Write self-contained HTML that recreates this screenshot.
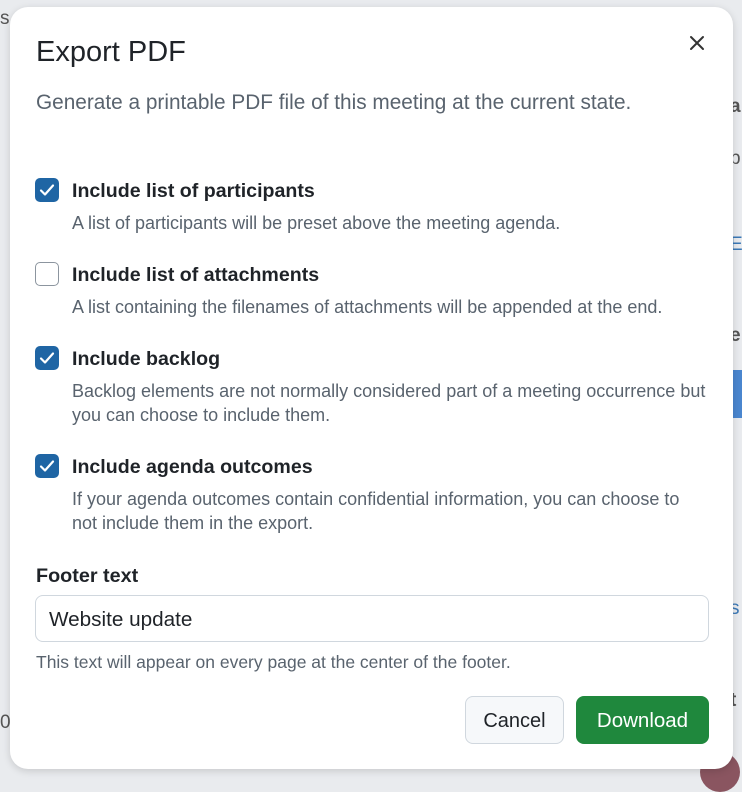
<!DOCTYPE html>
<html><head><style>
*{margin:0;padding:0;box-sizing:border-box}
body{width:742px;height:774px;overflow:hidden;background:#e9ebee;font-family:"Liberation Sans",sans-serif;position:relative;color:#1f2328}
.bg{position:absolute;color:#555;font-size:19px}
.modal{position:absolute;left:10px;top:7px;width:723px;height:762px;background:#fff;border-radius:18px;box-shadow:0 2px 8px rgba(0,0,0,.15)}
.a{position:absolute;white-space:nowrap}
.cb{position:absolute;left:25px;width:24px;height:24px;border-radius:5px;background:#1f65a4}
.cb svg{position:absolute;left:3px;top:3px}
.cb.off{background:#fff;border:1.5px solid #8c959f}
.lbl{position:absolute;left:62px;font-size:19.6px;font-weight:bold;color:#1f2328;white-space:nowrap}
.sub{position:absolute;left:62px;font-size:18px;color:#59636e;line-height:24px;white-space:nowrap}
</style></head><body>
<div class="bg" style="left:0;top:8px">s</div>
<div class="bg" style="left:730px;top:96px;font-weight:bold">a</div>
<div class="bg" style="left:730px;top:148px">b</div>
<div class="bg" style="left:730px;top:234px;color:#3b78b6">E</div>
<div class="bg" style="left:730px;top:325px;font-weight:bold">e</div>
<div style="position:absolute;left:733px;top:370px;width:9px;height:48px;background:#4a86cf"></div>
<div class="bg" style="left:730px;top:598px;color:#3b78b6">s</div>
<div class="bg" style="left:730px;top:690px;font-weight:bold">t</div>
<div class="bg" style="left:0;top:712px">0</div>
<div style="position:absolute;left:700px;top:752px;width:40px;height:40px;border-radius:50%;background:#8a5560"></div>
<div class="modal">
<div class="a" style="left:26px;top:29px;font-size:29px;color:#1f2328">Export PDF</div>
<svg class="a" style="left:679px;top:28px" width="16" height="16" viewBox="0 0 16 16"><path d="M2 2L14 14M14 2L2 14" stroke="#333" stroke-width="2" stroke-linecap="round"/></svg>
<div class="a" style="left:26px;top:84px;font-size:20.8px;color:#59636e">Generate a printable PDF file of this meeting at the current state.</div>

<div class="cb" style="top:171px"><svg width="18" height="18" viewBox="0 0 18 18"><path d="M3 9.5L7 13.5L15 4.5" fill="none" stroke="#fff" stroke-width="2.2" stroke-linecap="round" stroke-linejoin="round"/></svg></div>
<div class="lbl" style="top:173px">Include list of participants</div>
<div class="sub" style="top:204px">A list of participants will be preset above the meeting agenda.</div>

<div class="cb off" style="top:255px"></div>
<div class="lbl" style="top:257px">Include list of attachments</div>
<div class="sub" style="top:288px">A list containing the filenames of attachments will be appended at the end.</div>

<div class="cb" style="top:339px"><svg width="18" height="18" viewBox="0 0 18 18"><path d="M3 9.5L7 13.5L15 4.5" fill="none" stroke="#fff" stroke-width="2.2" stroke-linecap="round" stroke-linejoin="round"/></svg></div>
<div class="lbl" style="top:341px">Include backlog</div>
<div class="sub" style="top:372px">Backlog elements are not normally considered part of a meeting occurrence but<br>you can choose to include them.</div>

<div class="cb" style="top:447px"><svg width="18" height="18" viewBox="0 0 18 18"><path d="M3 9.5L7 13.5L15 4.5" fill="none" stroke="#fff" stroke-width="2.2" stroke-linecap="round" stroke-linejoin="round"/></svg></div>
<div class="lbl" style="top:449px">Include agenda outcomes</div>
<div class="sub" style="top:480px">If your agenda outcomes contain confidential information, you can choose to<br>not include them in the export.</div>

<div class="a" style="left:26px;top:558px;font-size:19.8px;font-weight:bold">Footer text</div>
<div class="a" style="left:25px;top:588px;width:674px;height:47px;border:1px solid #d0d7de;border-radius:8px;font-size:20.7px;padding:12px 0 0 13px">Website update</div>
<div class="a" style="left:26px;top:645px;font-size:17.5px;color:#59636e">This text will appear on every page at the center of the footer.</div>

<div class="a" style="left:455px;top:689px;width:99px;height:48px;border:1px solid #d0d7de;border-radius:8px;background:#f6f8fa;font-size:20px;text-align:center;line-height:48px">Cancel</div>
<div class="a" style="left:566px;top:689px;width:133px;height:48px;border-radius:8px;background:#1f883d;color:#fff;font-size:20.5px;text-align:center;line-height:50px">Download</div>
</div>
</body></html>
